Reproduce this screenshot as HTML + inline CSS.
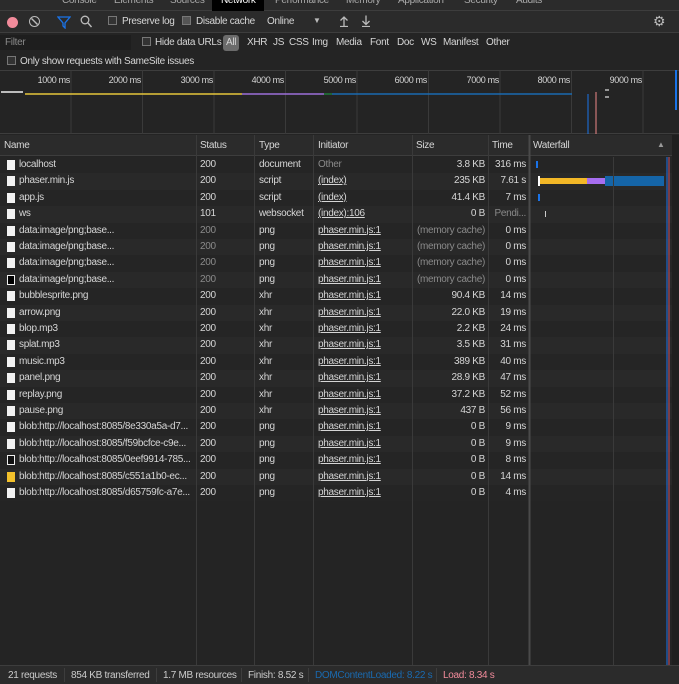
<!DOCTYPE html><html><head><style>
*{margin:0;padding:0;box-sizing:border-box}
body{width:679px;height:684px;background:#242424;font-family:"Liberation Sans",sans-serif;font-size:10px;letter-spacing:-0.3px;color:#d6d6d6;position:relative;overflow:hidden}
.a{position:absolute;white-space:nowrap}
.bar{position:absolute;left:0;width:679px}
.ul{text-decoration:underline}
.g{color:#8a8a8a}
.r{text-align:right}
.ic{position:absolute;left:7px;width:8px;height:10px;background:#f2f2f2}
.sep{position:absolute;top:668px;width:1px;height:14px;background:#3d3d3d}
</style></head><body>
<div class="bar" style="top:0;height:11px;background:#2b2b2b;border-bottom:1px solid #3d3d3d"></div>
<div class="a" style="left:212px;top:0;width:52px;height:11px;background:#000"></div>
<div class="a" style="top:-5px;left:62px;color:#aaa">Console</div>
<div class="a" style="top:-5px;left:114px;color:#aaa">Elements</div>
<div class="a" style="top:-5px;left:170px;color:#aaa">Sources</div>
<div class="a" style="top:-5px;left:221px;color:#fff">Network</div>
<div class="a" style="top:-5px;left:275px;color:#aaa">Performance</div>
<div class="a" style="top:-5px;left:346px;color:#aaa">Memory</div>
<div class="a" style="top:-5px;left:398px;color:#aaa">Application</div>
<div class="a" style="top:-5px;left:464px;color:#aaa">Security</div>
<div class="a" style="top:-5px;left:516px;color:#aaa">Audits</div>
<div class="bar" style="top:11px;height:22px;background:#2b2b2b;border-bottom:1px solid #3d3d3d"></div>
<div class="a" style="left:7px;top:17px;width:11px;height:11px;border-radius:50%;background:#f28b9b"></div>
<div class="a" style="left:29px;top:16px;width:11px;height:11px;border:1.5px solid #bbb;border-radius:50%"></div>
<svg class="a" style="left:29px;top:16px" width="11" height="11"><path d="M2.5 2.5l6 6" stroke="#bbb" stroke-width="1.4"/></svg>
<svg class="a" style="left:57px;top:15px" width="14" height="14"><path d="M1 2h12L8 8v5L6 11V8z" fill="none" stroke="#1a73e8" stroke-width="1.3"/></svg>
<svg class="a" style="left:80px;top:15px" width="12" height="13"><circle cx="5" cy="5" r="3.8" fill="none" stroke="#bbb" stroke-width="1.3"/><path d="M8 8l3.5 4" stroke="#bbb" stroke-width="1.4"/></svg>
<div class="a" style="left:108px;top:16px;width:9px;height:9px;border:1px solid #777;background:#333"></div>
<div class="a" style="left:122px;top:16px">Preserve log</div>
<div class="a" style="left:182px;top:16px;width:9px;height:9px;border:1px solid #777;background:#555"></div>
<div class="a" style="left:196px;top:16px">Disable cache</div>
<div class="a" style="left:267px;top:16px">Online</div>
<div class="a" style="left:313px;top:16px;font-size:8px;color:#bbb">▼</div>
<svg class="a" style="left:339px;top:15px" width="10" height="12"><path d="M5 2v9M1.5 5.5L5 2l3.5 3.5M1 11.5h8" stroke="#bbb" stroke-width="1.3" fill="none"/></svg>
<svg class="a" style="left:361px;top:15px" width="10" height="12"><path d="M5 0.5v9M1.5 6L5 9.5 8.5 6M1 11.5h8" stroke="#bbb" stroke-width="1.3" fill="none"/></svg>
<div class="a" style="left:653px;top:13px;color:#bbb;font-size:14px">⚙</div>
<div class="a" style="left:0;top:35px;width:131px;height:15px;background:#1e1e1e"></div>
<div class="a g" style="left:5px;top:37px">Filter</div>
<div class="a" style="left:142px;top:37px;width:9px;height:9px;border:1px solid #777;background:#333"></div>
<div class="a" style="left:155px;top:37px">Hide data URLs</div>
<div class="a" style="left:223px;top:35px;width:16px;height:16px;border-radius:3px;background:#6b6b6b"></div>
<div class="a" style="left:226px;top:37px">All</div>
<div class="a" style="left:247px;top:37px">XHR</div>
<div class="a" style="left:273px;top:37px">JS</div>
<div class="a" style="left:289px;top:37px">CSS</div>
<div class="a" style="left:312px;top:37px">Img</div>
<div class="a" style="left:336px;top:37px">Media</div>
<div class="a" style="left:370px;top:37px">Font</div>
<div class="a" style="left:397px;top:37px">Doc</div>
<div class="a" style="left:421px;top:37px">WS</div>
<div class="a" style="left:443px;top:37px">Manifest</div>
<div class="a" style="left:486px;top:37px">Other</div>
<div class="a" style="left:7px;top:56px;width:9px;height:9px;border:1px solid #777;background:#333"></div>
<div class="a" style="left:20px;top:56px">Only show requests with SameSite issues</div>
<div class="bar" style="top:70px;height:64px;background:#242424;border-top:1px solid #3d3d3d;border-bottom:1px solid #3d3d3d"></div>
<svg class="a" style="left:0;top:70px" width="679" height="64">
<g stroke="#3a3a3a"><path d="M71 0v64M142.5 0v64M214 0v64M285.5 0v64M357 0v64M428.5 0v64M500 0v64M571.5 0v64M643 0v64"/></g>
<path d="M1 22h22" stroke="#eee" stroke-width="1.5"/>
<path d="M25 24h217" stroke="#e5c53b" stroke-width="1.5"/>
<path d="M242 24h82" stroke="#9b6fd9" stroke-width="1.5"/>
<path d="M324 24h8" stroke="#1e7a3a" stroke-width="1.5"/>
<path d="M332 24h240" stroke="#1a6ab0" stroke-width="1.5"/>
<path d="M588 24v40" stroke="#1a73e8"/><path d="M596 22v42" stroke="#e88"/>
<path d="M605 20h4M605 27h4" stroke="#bbb" stroke-width="1.5"/>
<path d="M676 0v40" stroke="#1a73e8" stroke-width="2"/>
</svg>
<div class="a r" style="left:20px;width:50px;top:75px;font-size:9px">1000 ms</div>
<div class="a r" style="left:91px;width:50px;top:75px;font-size:9px">2000 ms</div>
<div class="a r" style="left:163px;width:50px;top:75px;font-size:9px">3000 ms</div>
<div class="a r" style="left:234px;width:50px;top:75px;font-size:9px">4000 ms</div>
<div class="a r" style="left:306px;width:50px;top:75px;font-size:9px">5000 ms</div>
<div class="a r" style="left:377px;width:50px;top:75px;font-size:9px">6000 ms</div>
<div class="a r" style="left:449px;width:50px;top:75px;font-size:9px">7000 ms</div>
<div class="a r" style="left:520px;width:50px;top:75px;font-size:9px">8000 ms</div>
<div class="a r" style="left:592px;width:50px;top:75px;font-size:9px">9000 ms</div>
<div class="bar" style="top:135px;height:21px;background:#2b2b2b;border-bottom:1px solid #3d3d3d"></div>
<div class="a" style="left:4px;top:140px">Name</div>
<div class="a" style="left:200px;top:140px">Status</div>
<div class="a" style="left:259px;top:140px">Type</div>
<div class="a" style="left:318px;top:140px">Initiator</div>
<div class="a" style="left:416px;top:140px">Size</div>
<div class="a" style="left:492px;top:140px">Time</div>
<div class="a" style="left:533px;top:140px">Waterfall</div>
<div class="a" style="left:657px;top:140px;font-size:8px;color:#999">▲</div>
<div id="rows"></div>
<svg class="a" style="left:0;top:135px" width="679" height="531">
<g stroke="#3a3a3a"><path d="M196.5 0v531M254.5 0v531M313.5 0v531M412.5 0v531M488.5 0v531"/><path d="M529.5 0v531" stroke="#4a4a4a" stroke-width="2"/><path d="M613.5 22v509"/></g>
<path d="M667 22v509" stroke="#1a73e8"/><path d="M669 22v509" stroke="#c56"/>
<rect x="672" y="0" width="7" height="531" fill="#1f1f1f"/>
</svg>
<div class="bar" style="top:665px;height:19px;background:#2b2b2b;border-top:1px solid #3d3d3d"></div>
<div class="a" style="left:8px;top:670px;color:#ccc">21 requests</div>
<div class="sep" style="left:64px"></div>
<div class="a" style="left:71px;top:670px;color:#ccc">854 KB transferred</div>
<div class="sep" style="left:156px"></div>
<div class="a" style="left:163px;top:670px;color:#ccc">1.7 MB resources</div>
<div class="sep" style="left:241px"></div>
<div class="a" style="left:248px;top:670px;color:#ccc">Finish: 8.52 s</div>
<div class="sep" style="left:308px"></div>
<div class="a" style="left:315px;top:670px;color:#1a6ab0">DOMContentLoaded: 8.22 s</div>
<div class="sep" style="left:436px"></div>
<div class="a" style="left:443px;top:670px;color:#f28b9b">Load: 8.34 s</div>
<script>
var d=[["localhost","200","document","Other","3.8 KB","316 ms",0,1],
["phaser.min.js","200","script","(index)","235 KB","7.61 s",0,2],
["app.js","200","script","(index)","41.4 KB","7 ms",0,3],
["ws","101","websocket","(index):106","0 B","Pendi...",0,4],
["data:image/png;base...","200","png","phaser.min.js:1","(memory cache)","0 ms",1,0],
["data:image/png;base...","200","png","phaser.min.js:1","(memory cache)","0 ms",1,0],
["data:image/png;base...","200","png","phaser.min.js:1","(memory cache)","0 ms",1,0],
["data:image/png;base...","200","png","phaser.min.js:1","(memory cache)","0 ms",1,0],
["bubblesprite.png","200","xhr","phaser.min.js:1","90.4 KB","14 ms",0,0],
["arrow.png","200","xhr","phaser.min.js:1","22.0 KB","19 ms",0,0],
["blop.mp3","200","xhr","phaser.min.js:1","2.2 KB","24 ms",0,0],
["splat.mp3","200","xhr","phaser.min.js:1","3.5 KB","31 ms",0,0],
["music.mp3","200","xhr","phaser.min.js:1","389 KB","40 ms",0,0],
["panel.png","200","xhr","phaser.min.js:1","28.9 KB","47 ms",0,0],
["replay.png","200","xhr","phaser.min.js:1","37.2 KB","52 ms",0,0],
["pause.png","200","xhr","phaser.min.js:1","437 B","56 ms",0,0],
["blob:http://localhost:8085/8e330a5a-d7...","200","png","phaser.min.js:1","0 B","9 ms",0,0],
["blob:http://localhost:8085/f59bcfce-c9e...","200","png","phaser.min.js:1","0 B","9 ms",0,0],
["blob:http://localhost:8085/0eef9914-785...","200","png","phaser.min.js:1","0 B","8 ms",0,0],
["blob:http://localhost:8085/c551a1b0-ec...","200","png","phaser.min.js:1","0 B","14 ms",0,0],
["blob:http://localhost:8085/d65759fc-a7e...","200","png","phaser.min.js:1","0 B","4 ms",0,0]];
var h="";
d.forEach(function(r,i){var t=157+16.4*i;
h+='<div class="bar" style="top:'+t+'px;height:16.4px;background:'+(i%2?'#292929':'#252525')+'"></div>';
var ic='#f2f2f2';if(i==18)ic='#111;border:1.5px solid #eee';if(i==19)ic='#f3c12b';if(i==7)ic='#000;border:1.5px solid #eee';
h+='<div class="ic" style="top:'+(t+3)+'px;background:'+ic+'"></div>';
var y=t+2;
h+='<div class="a" style="left:19px;top:'+y+'px;width:176px;overflow:hidden">'+r[0]+'</div>';
h+='<div class="a'+(r[6]?' g':'')+'" style="left:200px;top:'+y+'px">'+r[1]+'</div>';
h+='<div class="a" style="left:259px;top:'+y+'px">'+r[2]+'</div>';
h+='<div class="a '+(r[3]=="Other"?'g':'ul')+'" style="left:318px;top:'+y+'px">'+r[3]+'</div>';
h+='<div class="a r'+(r[6]?' g':'')+'" style="left:413px;width:72px;top:'+y+'px">'+r[4]+'</div>';
h+='<div class="a r'+(r[5]=="Pendi..."?' g':'')+'" style="left:489px;width:37px;top:'+y+'px">'+r[5]+'</div>';
if(r[7]==1)h+='<div class="a" style="left:536px;top:'+(t+4)+'px;width:2px;height:7px;background:#1a73e8"></div>';
if(r[7]==2)h+='<div class="a" style="left:538px;top:'+(t+3)+'px;width:2px;height:10px;background:#fff"></div><div class="a" style="left:540px;top:'+(t+5)+'px;width:47px;height:6px;background:#f3b827"></div><div class="a" style="left:587px;top:'+(t+5)+'px;width:18px;height:6px;background:#a76ef0"></div><div class="a" style="left:605px;top:'+(t+3)+'px;width:59px;height:10px;background:#1565a8"></div>';
if(r[7]==3)h+='<div class="a" style="left:538px;top:'+(t+4)+'px;width:2px;height:7px;background:#1a73e8"></div>';
if(r[7]==4)h+='<div class="a" style="left:545px;top:'+(t+5)+'px;width:1px;height:6px;background:#ccc"></div>';
});
document.getElementById("rows").innerHTML=h;
</script>
</body></html>
